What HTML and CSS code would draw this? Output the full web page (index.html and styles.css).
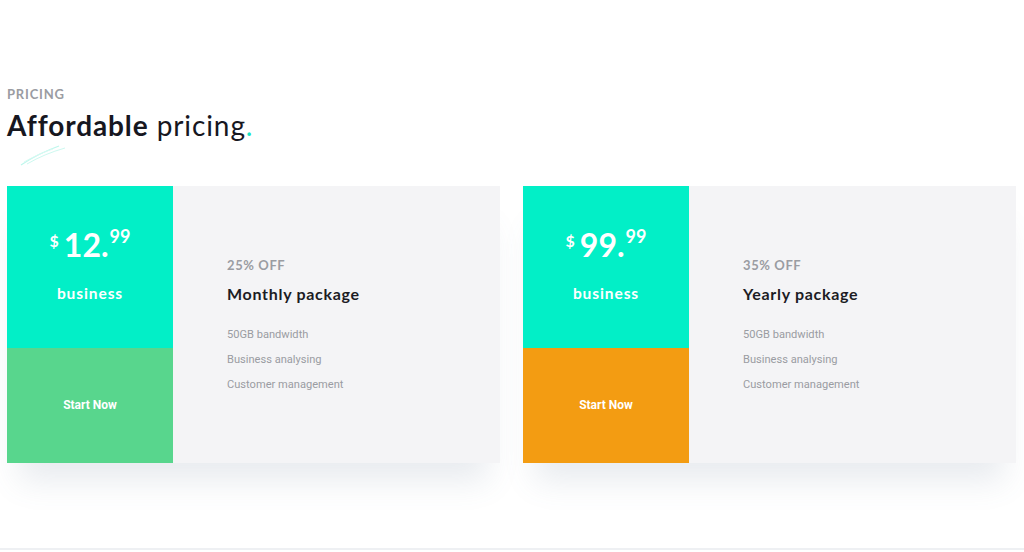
FILE: index.html
```html
<!DOCTYPE html>
<html lang="en">
<head>
<meta charset="utf-8">
<title>Pricing</title>
<link rel="stylesheet" href="styles.css">
</head>
<body>
<section class="pricing">
  <div class="heading">
    <p class="eyebrow">PRICING</p>
    <h2 class="title"><b>Affordable</b> pricing<span class="dot">.</span></h2>
    <svg class="swirl" width="48" height="22" viewBox="0 0 48 22" aria-hidden="true">
      <path d="M2 20 C14 12 26 6 40 1" stroke="#bdf7ec" stroke-width="1.2" fill="none"/>
      <path d="M8 19 C20 12 32 7 46 3" stroke="#cdf9f0" stroke-width="1" fill="none"/>
      <path d="M5 17 C16 11 24 7 34 4" stroke="#d8faf3" stroke-width="1" fill="none"/>
    </svg>
  </div>
  <div class="cards">
    <article class="card">
      <div class="side">
        <div class="top">
          <div class="price"><span class="cur">$</span><span class="int">12.</span><span class="dec">99</span></div>
          <div class="plan">business</div>
        </div>
        <a class="cta green" href="#">Start Now</a>
      </div>
      <div class="body">
        <p class="off">25% OFF</p>
        <h3 class="name">Monthly package</h3>
        <ul class="features">
          <li>50GB bandwidth</li>
          <li>Business analysing</li>
          <li>Customer management</li>
        </ul>
      </div>
    </article>
    <article class="card">
      <div class="side">
        <div class="top">
          <div class="price"><span class="cur">$</span><span class="int">99.</span><span class="dec">99</span></div>
          <div class="plan">business</div>
        </div>
        <a class="cta orange" href="#">Start Now</a>
      </div>
      <div class="body">
        <p class="off">35% OFF</p>
        <h3 class="name">Yearly package</h3>
        <ul class="features">
          <li>50GB bandwidth</li>
          <li>Business analysing</li>
          <li>Customer management</li>
        </ul>
      </div>
    </article>
  </div>
</section>
</body>
</html>
```
FILE: styles.css
```css
html, body {
  margin: 0;
  padding: 0;
  background: #ffffff;
}
body {
  font-family: "Lato", "Open Sans", sans-serif;
  height: 552px;
  overflow: hidden;
}
.pricing {
  padding: 86px 8px 0 7px;
  height: 462px;
  border-bottom: 2px solid #eef0f3;
}
.heading {
  display: flex;
  flex-direction: column;
}
.eyebrow {
  margin: 0;
  font-size: 13px;
  font-weight: 700;
  letter-spacing: 0.8px;
  color: #9a9ca2;
  line-height: 16px;
}
.title {
  margin: 7px 0 0;
  font-size: 28px;
  font-weight: 400;
  color: #17171f;
  line-height: 32px;
  letter-spacing: 0.9px;
}
.title b { font-weight: 700; }
.dot { color: #19e3c4; }
.swirl {
  margin: 4px 0 0 12px;
}
.cards {
  display: flex;
  gap: 23px;
  margin-top: 19px;
}
.card {
  flex: 0 0 493px;
  height: 277px;
  display: flex;
  background: #f4f4f6;
  box-shadow: 0 30px 30px -12px rgba(90, 115, 140, 0.14);
}
.side {
  width: 166px;
  display: flex;
  flex-direction: column;
}
.top {
  height: 162px;
  background: #02efc7;
  color: #fff;
  display: flex;
  flex-direction: column;
  align-items: center;
}
.price {
  margin-top: 41px;
  display: flex;
  align-items: flex-start;
  font-weight: 700;
  line-height: 1;
}
.cur { font-size: 16px; margin-top: 6px; margin-right: 5px; }
.int { font-size: 32px; margin-top: 2px; }
.dec { font-size: 18px; margin-left: 1px; }
.plan {
  margin-top: 23px;
  font-size: 15.5px;
  font-weight: 700;
  letter-spacing: 0.9px;
}
.cta {
  flex: 1;
  display: flex;
  align-items: center;
  justify-content: center;
  padding-bottom: 1px;
  font-family: "Roboto", sans-serif;
  font-size: 12px;
  font-weight: 700;
  color: #fff;
  text-decoration: none;
}
.green { background: #58d68d; }
.orange { background: #f39c12; }
.body {
  padding: 71px 0 0 54px;
}
.off {
  margin: 0;
  font-size: 13px;
  font-weight: 700;
  letter-spacing: 0.6px;
  color: #9a9ca2;
  line-height: 16px;
}
.name {
  margin: 11px 0 0;
  font-size: 16px;
  font-weight: 700;
  letter-spacing: 0.7px;
  color: #1c1c24;
  line-height: 20px;
}
.features {
  list-style: none;
  margin: 18px 0 0;
  padding: 0;
  font-family: "Roboto", sans-serif;
  font-size: 11.1px;
  color: #9a9ca2;
}
.features li {
  line-height: 25px;
}
```
